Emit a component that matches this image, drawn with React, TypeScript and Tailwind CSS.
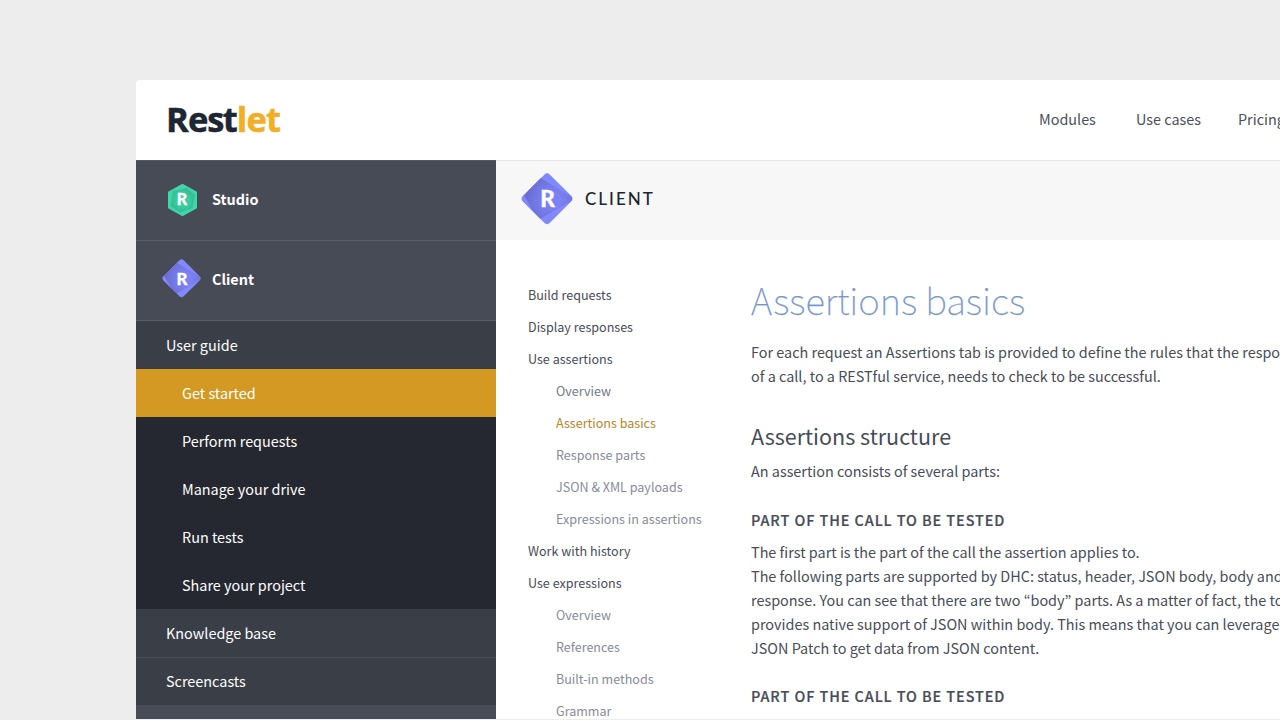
import React from "react";

const cjk = "font-['Noto_Sans_CJK_KR','Noto_Sans',sans-serif]";

function Diamond({ size, className = "" }: { size: number; className?: string }) {
  return (
    <svg width={size} height={size} viewBox="0 0 52 52" className={className}>
      <defs>
        <radialGradient id="dg1" gradientUnits="userSpaceOnUse" cx="32" cy="27" r="28">
          <stop offset="0.25" stopColor="#7c81f4" />
          <stop offset="0.7" stopColor="#7276e1" />
          <stop offset="1" stopColor="#686cd0" />
        </radialGradient>
        <clipPath id="dc">
          <rect x="7.1" y="6.7" width="38" height="38" rx="4" transform="rotate(45 26.1 25.7)" />
        </clipPath>
      </defs>
      <g clipPath="url(#dc)">
        <rect width="52" height="52" fill="#8288fd" />
        <path d="M18 4 L51 24 L51 27.5 L19 46 L11 41 L2 24 Z" fill="url(#dg1)" />
        <path d="M0 20 L4 24 L13 40 L10 44 L0 32 Z" fill="#8288fd" />
      </g>
      <text x="26.5" y="34" textAnchor="middle" fill="#fff" stroke="#fff" strokeWidth="0.4" fontSize="22.5" fontWeight="900" fontFamily="Lato, sans-serif">R</text>
    </svg>
  );
}

function Hexagon() {
  return (
    <svg width="30" height="34" viewBox="0 0 30 34" className="relative -top-px">
      <defs>
        <radialGradient id="hg" cx="0.5" cy="0.5" r="0.6">
          <stop offset="0.4" stopColor="#3ccda1" />
          <stop offset="1" stopColor="#30b48b" />
        </radialGradient>
      </defs>
      <path d="M15.5 2 L29 9.3 V24.7 L15.5 32 L2 24.7 V9.3 Z" fill="#41d5a9" stroke="#41d5a9" strokeWidth="2" strokeLinejoin="round" />
      <path d="M6 8.5 L20 5 L28 12 L25.5 25 L13 29.5 L3.5 23 Z" fill="url(#hg)" />
      <text x="15" y="22.2" textAnchor="middle" fill="#fff" stroke="#fff" strokeWidth="0.3" fontSize="16" fontWeight="900" fontFamily="Lato, sans-serif">R</text>
    </svg>
  );
}

const guide = ["Perform requests", "Manage your drive", "Run tests", "Share your project"];

const toc: { label: string; kind: "top" | "dark" | "active" | "sub" }[] = [
  { label: "Build requests", kind: "top" },
  { label: "Display responses", kind: "top" },
  { label: "Use assertions", kind: "top" },
  { label: "Overview", kind: "dark" },
  { label: "Assertions basics", kind: "active" },
  { label: "Response parts", kind: "sub" },
  { label: "JSON & XML payloads", kind: "sub" },
  { label: "Expressions in assertions", kind: "sub" },
  { label: "Work with history", kind: "top" },
  { label: "Use expressions", kind: "top" },
  { label: "Overview", kind: "sub" },
  { label: "References", kind: "sub" },
  { label: "Built-in methods", kind: "sub" },
  { label: "Grammar", kind: "sub" },
];

const tocStyle = {
  top: "text-[#484c57]",
  dark: "pl-7 text-[#747987]",
  active: "pl-7 text-[#b4872a]",
  sub: "pl-7 text-[#878b98]",
};

function Header() {
  return (
    <header className="flex h-20 shrink-0 items-center justify-between rounded-tl bg-white pl-[30px]">
      <div className="pb-[3px] font-['Open_Sans',sans-serif] text-[34.5px] leading-[77px] font-bold tracking-[-0.9px] text-[#1c2733] [-webkit-text-stroke:0.5px]">
        Re<span className="tracking-[-1.8px]">s</span>t<span className="text-[#f2ae27]">let</span>
      </div>
      <nav className="flex w-[241px] shrink-0 overflow-hidden pb-0.5 text-[14.4px] leading-6 whitespace-nowrap text-[#4b4f5a]">
        <a className="w-[97px] shrink-0">Modules</a>
        <a className="w-[102px] shrink-0">Use cases</a>
        <a className="shrink-0">Pricing</a>
      </nav>
    </header>
  );
}

function Sidebar() {
  return (
    <aside className="flex w-[360px] shrink-0 flex-col bg-[#474b56] text-[14.42px] text-white">
      <div className="flex h-20 shrink-0 items-center border-t border-[#535761] pl-[31px] font-bold">
        <Hexagon />
        <span className="ml-[15px] pb-1">Studio</span>
      </div>
      <div className="flex h-20 shrink-0 items-center border-t border-[#5b5f69] pl-[26px] font-bold">
        <Diamond size={39} className="relative -top-[2px]" />
        <span className="ml-[11px] pb-1">Client</span>
      </div>
      <div className="h-[49px] shrink-0 border-t border-[#5b5f69] bg-[#3a3e47] pl-[30px] leading-[48px]">User guide</div>
      <div className="h-12 shrink-0 bg-[#d39923] pl-[46px] leading-[48px]">Get started</div>
      <div className="shrink-0 bg-[#252830]">
        {guide.map((g) => (
          <div key={g} className="h-12 pl-[46px] leading-[48px]">{g}</div>
        ))}
      </div>
      <div className="h-12 shrink-0 bg-[#3a3e47] pl-[30px] leading-[48px]">Knowledge base</div>
      <div className="h-12 shrink-0 border-t border-[#4a4e59] bg-[#3a3e47] pl-[30px] leading-[46px]">Screencasts</div>
    </aside>
  );
}

function Article() {
  return (
    <article className="w-[529px] shrink-0 overflow-hidden pt-8 text-[14.42px] leading-6 whitespace-nowrap text-[#484c57]">
      <h1 className="h-[68px] text-[36.6px] leading-[56px] font-thin text-[#7798cb] [-webkit-text-stroke:0.25px]">Assertions basics</h1>
      <p>For each request an Assertions tab is provided to define the rules that the response</p>
      <p>of a call, to a RESTful service, needs to check to be successful.</p>
      <h2 className="mt-8 h-[39px] text-[21.5px] leading-8">Assertions structure</h2>
      <p>An assertion consists of several parts:</p>
      <h3 className="mt-[25px] h-8 font-medium tracking-[0.93px] [-webkit-text-stroke:0.2px]">PART OF THE CALL TO BE TESTED</h3>
      <p>The first part is the part of the call the assertion applies to.</p>
      <p>The following parts are supported by DHC: status, header, JSON body, body and</p>
      <p>response. You can see that there are two “body” parts. As a matter of fact, the tool</p>
      <p>provides native support of JSON within body. This means that you can leverage</p>
      <p>JSON Patch to get data from JSON content.</p>
      <h3 className="mt-6 h-8 font-medium tracking-[0.93px] [-webkit-text-stroke:0.2px]">PART OF THE CALL TO BE TESTED</h3>
    </article>
  );
}

export default function App() {
  return (
    <div className={`${cjk} h-[720px] w-[1280px] overflow-hidden bg-[#ededed] pt-20 pl-[136px]`}>
      <div className="flex h-[639px] flex-col overflow-hidden rounded-tl bg-white">
        <Header />
        <div className="flex min-h-0 flex-1">
          <Sidebar />
          <main className="flex min-w-0 flex-1 flex-col">
            <div className="flex h-20 shrink-0 items-center border-t border-[#e6e6e6] bg-[#f7f7f7] pl-[25px]">
              <Diamond size={52} className="relative -top-[2px]" />
              <span className="ml-3 pb-1 font-['Lato',sans-serif] text-[17px] font-medium tracking-[2px] text-[#1c2733]">CLIENT</span>
            </div>
            <div className="flex min-h-0 flex-1 overflow-hidden">
              <ul className="w-[255px] shrink-0 pt-[39px] pl-8 text-[12.55px] leading-8 whitespace-nowrap">
                {toc.map((t, i) => (
                  <li key={i} className={tocStyle[t.kind]}>{t.label}</li>
                ))}
              </ul>
              <Article />
            </div>
          </main>
        </div>
      </div>
    </div>
  );
}
